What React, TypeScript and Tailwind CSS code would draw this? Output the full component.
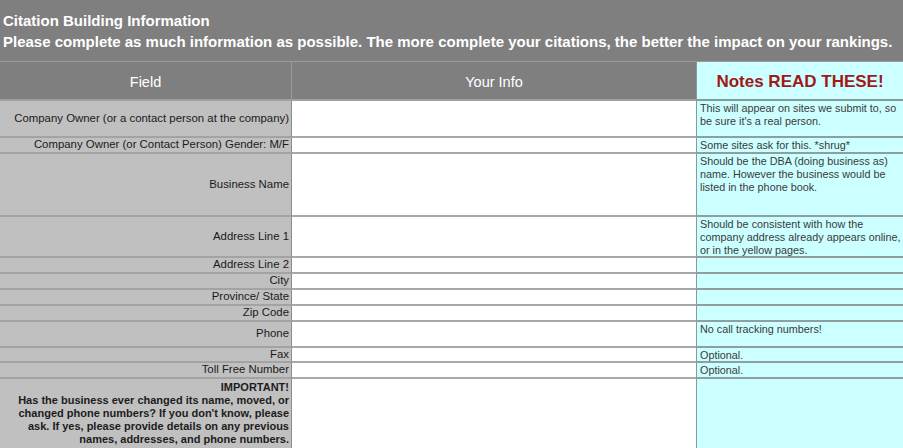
import React from "react";

type Row = { label: string; h: number; note?: string[] };

const rows: Row[] = [
  { label: "Company Owner (or a contact person at the company)", h: 37, note: ["This will appear on sites we submit to, so", "be sure it's a real person."] },
  { label: "Company Owner (or Contact Person) Gender: M/F", h: 16, note: ["Some sites ask for this. *shrug*"] },
  { label: "Business Name", h: 63, note: ["Should be the DBA (doing business as)", "name. However the business would be", "listed in the phone book."] },
  { label: "Address Line 1", h: 41, note: ["Should be consistent with how the", "company address already appears online,", "or in the yellow pages."] },
  { label: "Address Line 2", h: 16 },
  { label: "City", h: 16 },
  { label: "Province/ State", h: 16 },
  { label: "Zip Code", h: 16 },
  { label: "Phone", h: 26, note: ["No call tracking numbers!"] },
  { label: "Fax", h: 15, note: ["Optional."] },
  { label: "Toll Free Number", h: 16, note: ["Optional."] },
];

export default function App() {
  return (
    <div className="w-[903px] h-[448px] overflow-hidden bg-white" style={{ fontFamily: '"Liberation Sans", Arial, sans-serif' }}>
      <div className="h-[62px] bg-[#7f7f7f] text-white font-bold text-[15px] leading-[21px] pl-[3px] pt-[10px] border-b border-[#9a9a9a]">
        <div>Citation Building Information</div>
        <div className="whitespace-nowrap">Please complete as much information as possible. The more complete your citations, the better the impact on your rankings.</div>
      </div>
      <div className="grid grid-cols-[292px_404px_207px]">
        <div className="h-[39px] bg-[#7f7f7f] text-white text-[14.5px] pt-[4px] flex items-center justify-center border-r border-[#9a9a9a] border-b-2 border-b-[#a0a0a0]">Field</div>
        <div className="h-[39px] bg-[#7f7f7f] text-white text-[14.5px] pt-[4px] flex items-center justify-center border-b-2 border-b-[#a0a0a0]">Your Info</div>
        <div className="h-[39px] bg-[#ccffff] text-[#a01818] font-bold text-[17px] pt-[3px] flex items-center justify-center border-l border-[#8a9a9a] border-b-2 border-b-[#8a9898]">Notes READ THESE!</div>
        {rows.map((r, i) => (
          <React.Fragment key={i}>
            <div style={{ height: r.h }} className="bg-[#c0c0c0] border-r border-[#8c8c8c] border-b-2 border-b-[#a3a3a3] flex items-center justify-end pr-[2px] text-[11.4px] text-[#1a1a1a] whitespace-nowrap leading-none">
              {r.label}
            </div>
            <div style={{ height: r.h }} className="bg-white border-b-2 border-b-[#a8a8a8]" />
            <div style={{ height: r.h }} className="bg-[#ccffff] border-l border-[#8a9a9a] border-b-2 border-b-[#8f9f9f] pl-[3px] pt-[1px] text-[10.8px] leading-[13px] text-[#3a3a3a] whitespace-nowrap overflow-hidden">
              {r.note?.map((n, j) => <div key={j}>{n}</div>)}
            </div>
          </React.Fragment>
        ))}
        <div className="h-[69px] bg-[#c0c0c0] border-r border-[#8c8c8c] text-right pr-[2px] pt-[2px] text-[11px] leading-[13px] font-bold text-[#1c1c1c] whitespace-nowrap">
          <div>IMPORTANT!</div>
          <div>Has the business ever changed its name, moved, or</div>
          <div>changed phone numbers? If you don't know, please</div>
          <div>ask. If yes, please provide details on any previous</div>
          <div>names, addresses, and phone numbers.</div>
        </div>
        <div className="h-[69px] bg-white" />
        <div className="h-[69px] bg-[#ccffff] border-l border-[#8a9a9a]" />
      </div>
    </div>
  );
}
